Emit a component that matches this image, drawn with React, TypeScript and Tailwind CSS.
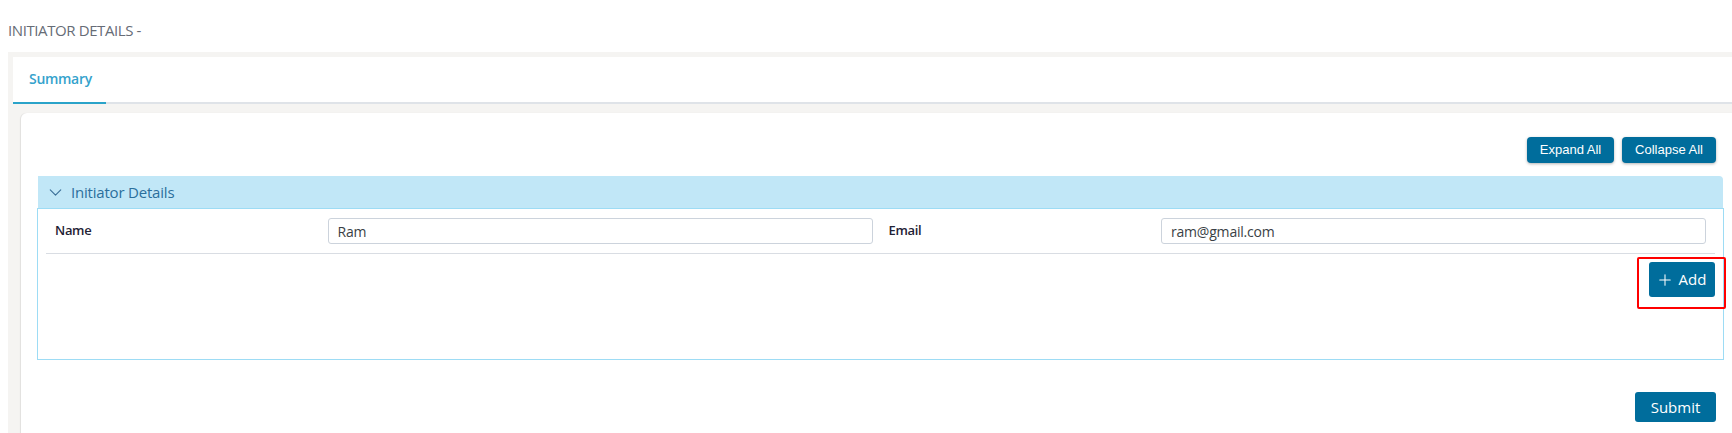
import React from 'react';
import { ChevronDown, Plus } from 'lucide-react';

const fields = [
  { label: 'Name', value: 'Ram' },
  { label: 'Email', value: 'ram@gmail.com' },
];

const App = () => {
  return (
    <div className="w-[1732px] h-[433px] overflow-hidden bg-white font-['Open_Sans',sans-serif]">
      <h1 className="pl-2 pt-[19px] h-[52px] text-[15px] font-medium text-[#666c76] tracking-[-0.4px]">INITIATOR DETAILS -</h1>

      <div className="ml-2 w-[1760px] bg-[#f5f4f2] pl-[5px] pt-[5px]">
        {/* tabs */}
        <div className="h-[47px] bg-white flex items-end border-b-2 border-[#dfe3e8]">
          <div className="w-[93px] h-[47px] -mb-[2px] border-b-2 border-[#2aa3c9] flex items-center pl-4 pb-[3px]">
            <span className="text-[14px] font-semibold text-[#35a2cc] tracking-[-0.3px]">Summary</span>
          </div>
        </div>

        {/* content card */}
        <div className="mt-[9px] ml-2 bg-white rounded-tl-md shadow-[-1px_0_1px_rgba(0,0,0,0.08)] pt-6 pl-[16px] pr-[23px] h-[330px]">
          <div className="w-[1687px]">
            <div className="flex justify-end gap-2 pr-2">
              <button className="h-[26px] w-[87px] rounded-sm bg-[#006d9c] text-white text-[13px] font-['Liberation_Sans',sans-serif] shadow-[0_1px_3px_rgba(0,0,0,0.3)]">
                Expand All
              </button>
              <button className="h-[26px] w-[94px] rounded-sm bg-[#006d9c] text-white text-[13px] font-['Liberation_Sans',sans-serif] shadow-[0_1px_3px_rgba(0,0,0,0.3)]">
                Collapse All
              </button>
            </div>

            {/* accordion */}
            <div className="mt-[13px]">
              <div className="mx-px h-[32px] bg-[#c1e7f7] flex items-center pl-[7px] rounded-tr-sm">
                <ChevronDown className="w-[21px] h-[21px] text-[#3a6f98]" strokeWidth={1.3} />
                <span className="ml-[5px] text-[15px] text-[#2b6f9c] tracking-[-0.2px]">Initiator Details</span>
              </div>
              <div className="h-[152px] border border-[#9ddcf5] px-2">
                <div className="grid grid-cols-2 gap-4 px-[9px] pt-[9px] pb-[9px] border-b border-[#d9dde3]">
                  {fields.map((f) => (
                    <div key={f.label} className="grid grid-cols-3">
                      <label className="pt-[3px] text-[13px] font-semibold text-[#1f2235] tracking-[-0.3px]">{f.label}</label>
                      <input
                        readOnly
                        value={f.value}
                        className="col-span-2 h-[26px] rounded-[3px] border border-[#ccd3dc] px-[9px] text-[14px] text-[#3a3f45] outline-none tracking-[-0.2px]"
                      />
                    </div>
                  ))}
                </div>
                <div className="flex justify-end mt-2">
                  <div className="relative">
                    <button className="h-[35px] w-[66px] rounded-[3px] bg-[#006d9c] text-white text-[15px] flex items-center justify-center gap-[5px] pr-[2px]">
                      <Plus className="w-[18px] h-[18px]" strokeWidth={1.4} />
                      <span>Add</span>
                    </button>
                    <div className="absolute -left-3 -right-[11px] -top-[5px] -bottom-3 border-2 border-[#ff0000] rounded-[2px]" />
                  </div>
                </div>
              </div>
            </div>

            <div className="flex justify-end pr-2 mt-[32px]">
              <button className="h-[30px] w-[81px] rounded-[3px] bg-[#006d9c] text-white text-[15px]">Submit</button>
            </div>
          </div>
        </div>
      </div>
    </div>
  );
};

export default App;
